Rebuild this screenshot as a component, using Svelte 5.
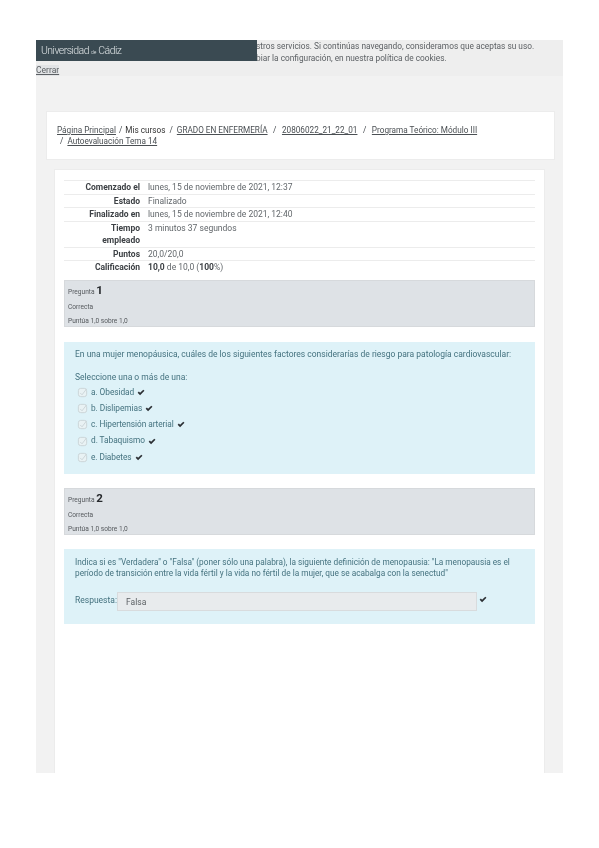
<script>
  const summary = [
    { label: 'Comenzado el', value: 'lunes, 15 de noviembre de 2021, 12:37' },
    { label: 'Estado', value: 'Finalizado' },
    { label: 'Finalizado en', value: 'lunes, 15 de noviembre de 2021, 12:40' },
    { label: 'Tiempo empleado', value: '3 minutos 37 segundos' },
    { label: 'Puntos', value: '20,0/20,0' }
  ];
  const options = ['a. Obesidad', 'b. Dislipemias', 'c. Hipertensión arterial', 'd. Tabaquismo', 'e. Diabetes'];
</script>

{#snippet tick()}
  <svg class="tick" viewBox="0 0 12 10" aria-hidden="true">
    <path d="M1 5.2 L2.8 3.6 L4.6 5.5 L9.4 .8 L11.2 2.5 L4.6 9.2 Z" />
  </svg>
{/snippet}

{#snippet qhead(n)}
  <div class="qinfo">
    <div class="qno">Pregunta <b>{n}</b></div>
    <div class="qline">Correcta</div>
    <div class="qline">Puntúa 1,0 sobre 1,0</div>
  </div>
{/snippet}

<div class="page">
  <div class="cookies">
    <div class="brand">Universidad <small>de</small> Cádiz</div>
    <p>stros servicios. Si continúas navegando, consideramos que aceptas su uso.<br />
      biar la configuración, en nuestra política de cookies.</p>
    <a href="#cerrar" class="close">Cerrar</a>
  </div>

  <nav class="crumbs">
    <a href="#p">Página Principal</a><i class="tight">/</i><span>Mis cursos</span><i>/</i><a href="#g">GRADO EN ENFERMERÍA</a><i class="wide">/</i><a href="#c">20806022_21_22_01</a><i class="wide">/</i><a href="#m">Programa Teórico: Módulo III</a>
    <br /><i class="first">/</i><a href="#t">Autoevaluación Tema 14</a>
  </nav>

  <main class="card">
    <table>
      <tbody>
        {#each summary as row}
          <tr><th>{row.label}</th><td>{row.value}</td></tr>
        {/each}
        <tr><th>Calificación</th><td><b>10,0</b> de 10,0 (<b>100</b>%)</td></tr>
      </tbody>
    </table>

    {@render qhead(1)}
    <section class="qtext first-q">
      <p>En una mujer menopáusica, cuáles de los siguientes factores considerarías de riesgo para patología cardiovascular:</p>
      <p class="prompt">Seleccione una o más de una:</p>
      <ul>
        {#each options as opt}
          <li>
            <svg class="box" viewBox="0 0 12 12" aria-hidden="true">
              <rect x="1.5" y="1.5" width="9" height="9" rx="2.5" />
              <path d="M3.5 6.5 L5.5 8.5 L10.5 2" />
            </svg>
            <span>{opt}</span>
            {@render tick()}
          </li>
        {/each}
      </ul>
    </section>

    {@render qhead(2)}
    <section class="qtext second-q">
      <p>Indica si es "Verdadera" o "Falsa" (poner sólo una palabra), la siguiente definición de menopausia: "La menopausia es el<br />período de transición entre la vida fértil y la vida no fértil de la mujer, que se acabalga con la senectud"</p>
      <div class="answer">
        <span>Respuesta:</span>
        <div class="input">Falsa</div>
        {@render tick()}
      </div>
    </section>
  </main>
</div>

<style>
  :global(body) {
    margin: 0;
    background: #fff;
  }

  .page {
    margin: 40px 36px 0;
    height: 733px;
    background: #f2f2f2;
    font-family: Roboto, "Liberation Sans", sans-serif;
    font-size: 8.5px;
    color: #4a4f53;
    filter: blur(0.35px);
    overflow: hidden;
  }

  .cookies {
    position: relative;
    height: 36px;
    background: #eeeeee;
    color: #5c6064;
  }

  .cookies p {
    margin: 0;
    padding: 1px 0 0 220px;
    font-size: 8.3px;
    line-height: 11.5px;
    white-space: nowrap;
  }

  .brand {
    position: absolute;
    left: 0;
    top: 0;
    width: 221px;
    height: 21px;
    background: #3a4a52;
    color: #dfe4e6;
    font-size: 10.5px;
    font-weight: 300;
    letter-spacing: -0.55px;
    line-height: 21px;
    padding-left: 5px;
    box-sizing: border-box;
  }

  .brand small {
    font-size: 5px;
    letter-spacing: 0;
  }

  .close {
    position: absolute;
    left: 0;
    top: 25px;
    color: #5c6064;
    background: #e2e4e6;
    line-height: 11px;
  }

  a {
    color: #4a4f53;
    text-decoration: underline;
  }

  .crumbs {
    margin: 35px 8px 9px 10px;
    height: 49px;
    box-sizing: border-box;
    padding: 13px 10px 0;
    background: #fff;
    border: 1px solid #ececec;
    font-size: 8.2px;
    line-height: 11px;
    white-space: nowrap;
  }

  .crumbs i {
    font-style: normal;
    margin: 0 4px;
  }

  .crumbs i.tight {
    margin: 0 3px;
  }

  .crumbs i.wide {
    margin: 0 5.5px;
  }

  .crumbs i.first {
    margin-left: 3px;
  }

  .crumbs span {
    color: #333;
  }

  .card {
    margin: 0 18px;
    height: 620px;
    padding: 10px 9px 0;
    background: #fff;
    border: 1px solid #ececec;
    border-bottom: 0;
  }

  table {
    width: 100%;
    border-collapse: collapse;
    margin-bottom: 6px;
    line-height: 12.5px;
  }

  tr {
    border-top: 1px solid #ececec;
  }

  th {
    width: 76px;
    box-sizing: border-box;
    padding: 0 0 0 14px;
    text-align: right;
    font-weight: 700;
    color: #3d4145;
  }

  td {
    padding: 0 0 0 8px;
    vertical-align: top;
    color: #62676b;
  }

  td b {
    color: #3d4145;
  }

  .qinfo {
    height: 47px;
    box-sizing: border-box;
    padding: 1px 3px;
    background: #dee2e6;
    border: 1px solid #d6d9dc;
    font-size: 6.6px;
    color: #55595d;
  }

  .qno {
    line-height: 16px;
  }

  .qno b {
    font-size: 11.5px;
    color: #26292c;
  }

  .qline {
    line-height: 14px;
  }

  .qtext {
    margin: 15px 0 14px;
    padding: 7px 11px 0;
    background: #def2f8;
    color: #44727f;
    line-height: 11.5px;
  }

  .qtext p {
    margin: 0;
  }

  .first-q {
    height: 132px;
    box-sizing: border-box;
  }

  .qtext .prompt {
    padding-top: 12px;
  }

  ul {
    list-style: none;
    margin: 0;
    padding: 1px 0 0 2px;
  }

  li {
    display: flex;
    align-items: center;
    gap: 2px;
    height: 16.2px;
    font-size: 8.3px;
    letter-spacing: -0.05px;
  }

  .box {
    width: 11px;
    height: 11px;
    margin-right: 1px;
    fill: #e9f2f4;
    stroke: #c9d3d6;
    stroke-width: 1;
  }

  .box path {
    fill: none;
  }

  .tick {
    width: 8px;
    height: 7px;
    margin-left: 1px;
    fill: #2b2f33;
  }

  .second-q {
    height: 75px;
    box-sizing: border-box;
    margin-top: 14px;
    padding-top: 8px;
  }

  .second-q p {
    font-size: 8.25px;
    line-height: 11px;
  }

  .answer {
    display: flex;
    align-items: center;
    margin-top: 13px;
  }

  .answer span {
    width: 42px;
    flex: none;
  }

  .input {
    width: 360px;
    height: 19px;
    box-sizing: border-box;
    margin-right: 1px;
    padding-left: 8px;
    line-height: 18px;
    background: #e8ebed;
    border: 1px solid #d8dbdd;
    color: #5a5f63;
  }

  .answer .tick {
    margin-top: -4px;
  }
</style>
